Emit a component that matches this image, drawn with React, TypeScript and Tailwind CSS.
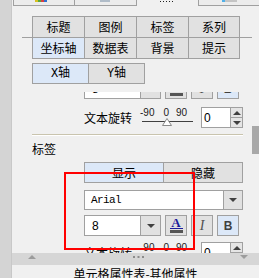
import React from "react";

const cjk = "[font-family:'Noto_Sans_CJK_SC',sans-serif]";
const sans = "[font-family:'Liberation_Sans',Arial,sans-serif]";
const mono = "[font-family:'Liberation_Mono','Noto_Sans_CJK_SC',monospace]";

function DownArrow({ className = "" }: { className?: string }) {
  return (
    <svg width="8" height="4" viewBox="0 0 8 4" className={className}>
      <path d="M0 0H8L4 4Z" fill="currentColor" />
    </svg>
  );
}

function UpArrow({ className = "" }: { className?: string }) {
  return (
    <svg width="8" height="4" viewBox="0 0 8 4" className={className}>
      <path d="M0 4H8L4 0Z" fill="currentColor" />
    </svg>
  );
}

function TopTabs() {
  return (
    <div className="flex h-[6px] shrink-0">
      <div className="ml-[1px] w-[62px] border-x border-b border-[#a0a0a0] bg-[#ececec] pl-[21px]">
        <svg width="12" height="2" viewBox="0 0 12 2" className="block">
          <rect x="0" y="0" width="3" height="2" fill="#d8c020" />
          <rect x="3" y="0" width="3" height="2" fill="#58a840" />
          <rect x="6" y="0" width="3" height="2" fill="#d84040" />
          <rect x="9" y="0" width="3" height="2" fill="#3070d0" />
        </svg>
      </div>
      <div className="w-[62px] border-r border-b border-[#a0a0a0] bg-[#ececec] pl-[25px]">
        <div className="h-[2px] w-[10px] bg-[#b0bcc8]" />
      </div>
      <div className="w-[61px] pl-[23px]">
        <svg width="14" height="2" viewBox="0 0 14 2" className="block">
          {[0, 3, 6, 9, 12].map((x) => (
            <rect key={x} x={x} y="1" width="1" height="1" fill="#202020" />
          ))}
        </svg>
      </div>
      <div className="flex-1 border-l border-b border-[#a0a0a0] bg-[#ececec] pl-[23px]">
        <div className="flex h-[2px]">
          <div className="w-[3px] bg-[#50b0e8]" />
          <div className="w-[12px] bg-[#c4c4c4]" />
        </div>
      </div>
    </div>
  );
}

function Tab({ label, active = false, last = false, row }: { label: string; active?: boolean; last?: boolean; row: 1 | 2 }) {
  return (
    <div
      className={`flex h-[21px] w-[52px] items-center justify-center border-l border-[#a0a0a0] text-[12px] ${
        row === 1 ? "border-t" : "border-b"
      } ${last ? "border-r" : ""} ${active ? "bg-[#dce8f8]" : "bg-[#e1e1e1]"}`}
    >
      {label}
    </div>
  );
}

function SizeRow() {
  return (
    <div className="flex h-[21px] shrink-0 pl-[72px]">
      <div className={`flex w-[57px] items-center border border-[#a0a0a0] bg-white pl-[7px] text-[12px] ${sans}`}>8</div>
      <div className="flex w-[20px] items-center justify-center border-y border-r border-[#a0a0a0] bg-[#e1e1e1] text-[#404040]">
        <DownArrow />
      </div>
      <div className="ml-[4px] flex w-[22px] flex-col items-center border border-[#a0a0a0] bg-[#e1e1e1] pt-[1px]">
        <span className="[font-family:'Liberation_Serif',serif] text-[13px] leading-[11px] font-bold text-[#1c1c9c]">A</span>
        <div className="h-[1px] w-[13px] bg-[#1c1c9c]" />
        <div className="mt-[1px] h-[3px] w-[13px] bg-[#555555]" />
      </div>
      <div className="ml-[4px] flex w-[22px] items-center justify-center border border-[#a0a0a0] bg-[#e1e1e1] [font-family:'Liberation_Serif',serif] text-[14px] italic text-[#505050]">
        I
      </div>
      <div className={`ml-[4px] flex w-[22px] items-center justify-center border border-[#a0a0a0] bg-[#dce8f8] text-[12px] font-bold text-[#404040] ${sans}`}>
        B
      </div>
    </div>
  );
}

function RotateRow() {
  return (
    <div className="flex h-[21px] shrink-0 items-center pl-[72px]">
      <span className="w-[48px] text-[12px] leading-[16px]">文本旋转</span>
      <div className="ml-[8px] flex h-full w-[53px] flex-col">
        <div className={`mt-[1px] flex text-[10px] leading-[10px] text-[#202020] ${sans}`}>
          <span>-90</span>
          <span className="ml-[9px]">0</span>
          <span className="ml-[7px]">90</span>
        </div>
        <svg width="53" height="8" viewBox="0 0 53 8" className="block">
          <line x1="2" y1="3.5" x2="53" y2="3.5" stroke="#404040" strokeWidth="1" />
          <path d="M22.5 7.5L27 0.5L31.5 7.5Z" fill="#ffffff" stroke="#8a8a8a" strokeWidth="1" />
        </svg>
      </div>
      <div className="ml-[8px] flex h-full">
        <div className={`flex w-[30px] items-center border border-[#a0a0a0] bg-white pl-[2px] text-[12px] ${sans}`}>0</div>
        <div className="flex w-[12px] flex-col border-y border-r border-[#a0a0a0] bg-[#e5e5e5] text-[#404040]">
          <div className="flex flex-1 items-center justify-center border-b border-[#a0a0a0]">
            <UpArrow />
          </div>
          <div className="flex flex-1 items-center justify-center">
            <DownArrow />
          </div>
        </div>
      </div>
    </div>
  );
}

export default function App() {
  return (
    <div className={`relative flex h-[278px] w-[259px] overflow-hidden bg-[#f0f0f0] text-black ${cjk}`}>
      <div className="h-full w-[12px] shrink-0 border-r border-[#c8c8c8] bg-[#d4d4d4]" />
      <div className="flex w-[247px] flex-col">
        <div className="flex h-[253px] shrink-0 flex-col">
          <TopTabs />
          <div className="flex min-h-0 flex-1">
            <div className="flex w-[240px] flex-col">
              <div className="mt-[10px] ml-[10px] flex w-[230px] border-b border-[#a0a0a0] pl-[10px]">
                <Tab row={1} label="标题" />
                <Tab row={1} label="图例" />
                <Tab row={1} label="标签" />
                <Tab row={1} label="系列" last />
              </div>
              <div className="flex pl-[20px]">
                <Tab row={2} label="坐标轴" active />
                <Tab row={2} label="数据表" />
                <Tab row={2} label="背景" />
                <Tab row={2} label="提示" last />
              </div>
              <div className="mt-[4px] flex h-[21px] pl-[20px] text-[12px]">
                <div className={`flex w-[57px] items-center justify-center border border-[#a0a0a0] bg-[#dce8f8] ${mono}`}>X轴</div>
                <div className={`flex w-[56px] items-center justify-center border-y border-r border-[#a0a0a0] bg-[#e1e1e1] ${mono}`}>Y轴</div>
              </div>
              {/* scrolled panel: the first row sits partly under the top edge */}
              <div className="mt-[8px] flex min-h-0 flex-1 flex-col overflow-hidden">
                <div className="-mt-[14px] flex flex-col">
                  <SizeRow />
                  <div className="mt-[8px]">
                    <RotateRow />
                  </div>
                  <div className="mt-[6px] ml-[20px] w-[211px] border-t border-b border-t-[#c9c4ae] border-b-white" />
                  <div className="mt-[5px] pl-[20px] text-[12px] leading-[16px]">标签</div>
                  <div className="mt-[5px] flex h-[21px] pl-[72px] text-[12px]">
                    <div className="flex w-[80px] items-center justify-center border border-[#a0a0a0] bg-[#dce8f8]">显示</div>
                    <div className="flex w-[79px] items-center justify-center border-y border-r border-[#a0a0a0] bg-[#e1e1e1]">隐藏</div>
                  </div>
                  <div className="mt-[7px] flex h-[20px] pl-[72px]">
                    <div className={`flex w-[140px] items-center border border-[#a0a0a0] bg-white pl-[6px] text-[11px] tracking-[-0.6px] ${mono}`}>
                      Arial
                    </div>
                    <div className="flex w-[19px] items-center justify-center border-y border-r border-[#a0a0a0] bg-[#e1e1e1] text-[#404040]">
                      <DownArrow />
                    </div>
                  </div>
                  <div className="mt-[5px]">
                    <SizeRow />
                  </div>
                  <div className="mt-[6px]">
                    <RotateRow />
                  </div>
                </div>
              </div>
            </div>
            <div className="w-[7px]">
              <div className="mt-[120px] h-[28px] bg-[#a8a8a8]" />
            </div>
          </div>
        </div>
        <div className="flex h-[12px] shrink-0 items-start justify-between bg-[#d6d6d6] pt-[2px] text-[#9c9c9c]">
          <UpArrow className="ml-[16px]" />
          <svg width="11" height="2" viewBox="0 0 11 2" className="mt-[1px] block">
            <rect x="0" y="0" width="2" height="2" fill="#8c8c8c" />
            <rect x="4.5" y="0" width="2" height="2" fill="#8c8c8c" />
            <rect x="9" y="0" width="2" height="2" fill="#8c8c8c" />
          </svg>
          <DownArrow className="mr-[11px]" />
        </div>
        <div className="pt-[1px] text-center text-[12px] leading-[16px]">单元格属性表-其他属性</div>
      </div>
      <div className="pointer-events-none absolute top-[172px] left-[64px] h-[78px] w-[131px] border-2 border-[#ff0000]" />
    </div>
  );
}
